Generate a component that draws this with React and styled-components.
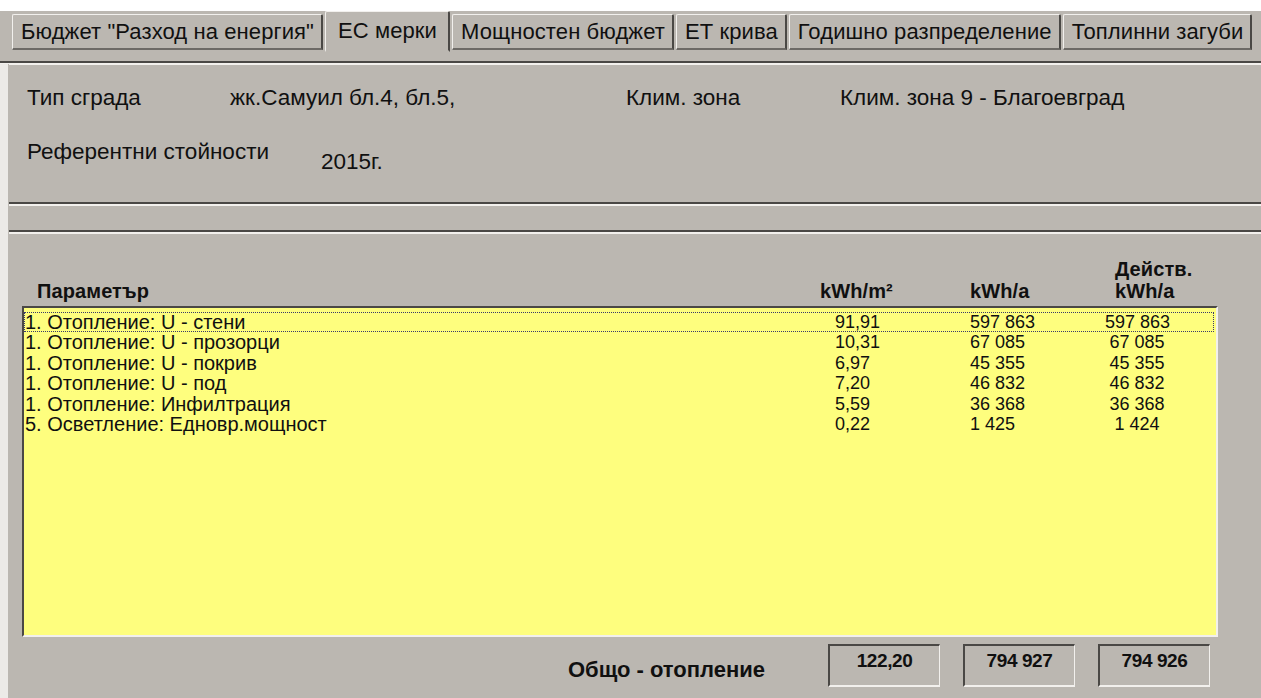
import React from 'react'
import styled, { createGlobalStyle } from 'styled-components'

const GlobalStyle = createGlobalStyle`
  html, body {
    margin: 0;
    padding: 0;
    background: #ffffff;
  }
  body {
    font-family: "Liberation Sans", Arial, sans-serif;
    color: #101010;
    overflow: hidden;
  }
`

const gray = '#bbb7b1'
const dark = '#4a4845'
const light = '#f2f0ed'

const tabs = [
  'Бюджет "Разход на енергия"',
  'ЕС мерки',
  'Мощностен бюджет',
  'ЕТ крива',
  'Годишно разпределение',
  'Топлинни загуби',
]

const rows = [
  ['1. Отопление: U - стени', '91,91', '597 863', '597 863'],
  ['1. Отопление: U - прозорци', '10,31', '67 085', '67 085'],
  ['1. Отопление: U - покрив', '6,97', '45 355', '45 355'],
  ['1. Отопление: U - под', '7,20', '46 832', '46 832'],
  ['1. Отопление: Инфилтрация', '5,59', '36 368', '36 368'],
  ['5. Осветление: Едновр.мощност', '0,22', '1 425', '1 424'],
]

const totals = ['122,20', '794 927', '794 926']

function App() {
  return (
    <Window>
      <GlobalStyle />
      <TabStrip>
        {tabs.map((t, i) => (
          <Tab key={t} $active={i === 1}>{t}</Tab>
        ))}
      </TabStrip>
      <Body>
        <Panel $height={137}>
          <InfoRow>
            <Label>Тип сграда</Label>
            <Label>жк.Самуил бл.4, бл.5,</Label>
            <Label>Клим. зона</Label>
            <Label>Клим. зона 9 - Благоевград</Label>
          </InfoRow>
          <RefRow>
            <Label>Референтни стойности</Label>
            <RefValue>2015г.</RefValue>
          </RefRow>
        </Panel>
        <Panel $height={24} />
        <MainPanel>
          <HeadRow>
            <HeadCell>Параметър</HeadCell>
            <HeadCell>kWh/m²</HeadCell>
            <HeadCell>kWh/a</HeadCell>
            <HeadCell>Действ.<br />kWh/a</HeadCell>
          </HeadRow>
          <ListBox>
            {rows.map((r, i) => (
              <Row key={r[0]} $focused={i === 0}>
                <Cell>{r[0]}</Cell>
                <NumCell>{r[1]}</NumCell>
                <NumCell>{r[2]}</NumCell>
                <NumCell $center>{r[3]}</NumCell>
              </Row>
            ))}
          </ListBox>
          <Footer>
            <TotalLabel>Общо - отопление</TotalLabel>
            {totals.map(v => (
              <TotalBox key={v}>{v}</TotalBox>
            ))}
          </Footer>
        </MainPanel>
      </Body>
    </Window>
  )
}

const Window = styled.div`
  width: 1261px;
  height: 698px;
  padding-top: 11px;
  box-sizing: border-box;
  display: flex;
  flex-direction: column;
`

const TabStrip = styled.div`
  display: flex;
  align-items: flex-start;
  gap: 2px;
  height: 52px;
  padding-left: 12px;
  background: ${gray};
  border-bottom: 2px solid ${dark};
  box-sizing: border-box;
`

const Tab = styled.div`
  font-size: 22px;
  letter-spacing: 0.1px;
  white-space: nowrap;
  box-sizing: border-box;
  background: ${gray};
  border-top: 1px solid ${light};
  border-left: 1px solid ${light};
  border-right: 2px solid ${dark};
  border-bottom: 2px solid ${({ $active }) => ($active ? gray : '#6d6a66')};
  border-radius: 2px 2px 0 0;
  height: ${({ $active }) => ($active ? '41px' : '36px')};
  margin-top: ${({ $active }) => ($active ? '0' : '3px')};
  padding: ${({ $active }) => ($active ? '6px 11px 0 12px' : '4px 7px 0 8px')};
`

const Body = styled.div`
  flex: 1;
  display: flex;
  flex-direction: column;
  padding-left: 9px;
  background: linear-gradient(to right, #eceae7 0 8px, ${gray} 8px);
  border-top: 1px solid ${light};
`

const Panel = styled.div`
  height: ${({ $height }) => $height}px;
  background: ${gray};
  border-top: 1px solid ${light};
  border-bottom: 2px solid ${dark};
  box-sizing: content-box;
  padding: 0 0 0 18px;
  & + & {
    border-top: 2px solid ${light};
  }
`

const InfoRow = styled.div`
  display: grid;
  grid-template-columns: 203px 396px 214px 1fr;
  padding-top: 22px;
`

const Label = styled.span`
  font-size: 22.5px;
  line-height: 22px;
  white-space: nowrap;
`

const RefRow = styled.div`
  display: flex;
  align-items: flex-start;
  gap: 52px;
  padding-top: 32px;
`

const RefValue = styled(Label)`
  margin-top: 10px;
`

const MainPanel = styled.div`
  flex: 1;
  display: flex;
  flex-direction: column;
  background: ${gray};
  border-top: 2px solid ${light};
  padding: 24px 43px 0 13px;
`

const HeadRow = styled.div`
  display: grid;
  grid-template-columns: 783px 150px 145px 1fr;
  align-items: end;
  padding-left: 15px;
  height: 44px;
`

const HeadCell = styled.div`
  font-size: 20px;
  font-weight: bold;
  letter-spacing: 0.1px;
  line-height: 22px;
`

const ListBox = styled.div`
  height: 323px;
  margin-top: 4px;
  background: #fefe7e;
  border-top: 2px solid ${dark};
  border-left: 2px solid ${dark};
  border-right: 2px solid ${light};
  border-bottom: 2px solid ${light};
  padding: 4px 2px 0 0;
`

const Row = styled.div`
  display: grid;
  grid-template-columns: 810px 135px 135px 64px;
  height: 20.4px;
  line-height: 19px;
  box-sizing: border-box;
  border: 1px dotted ${({ $focused }) => ($focused ? '#3a3a6a' : 'transparent')};
`

const Cell = styled.span`
  font-size: 20px;
  white-space: nowrap;
`

const NumCell = styled(Cell)`
  font-size: 18px;
  text-align: ${({ $center }) => ($center ? 'center' : 'left')};
`

const Footer = styled.div`
  display: flex;
  align-items: flex-start;
  padding: 7px 0 0 546px;
  gap: 23px;
`

const TotalLabel = styled.div`
  font-size: 22px;
  font-weight: bold;
  margin-top: 13px;
  width: 237px;
`

const TotalBox = styled.div`
  width: 112px;
  height: 43px;
  box-sizing: border-box;
  border-top: 2px solid ${dark};
  border-left: 2px solid ${dark};
  border-right: 1px solid ${light};
  border-bottom: 2px solid ${light};
  text-align: center;
  font-size: 19px;
  font-weight: bold;
  letter-spacing: -0.4px;
  padding-top: 4px;
`

export default App
